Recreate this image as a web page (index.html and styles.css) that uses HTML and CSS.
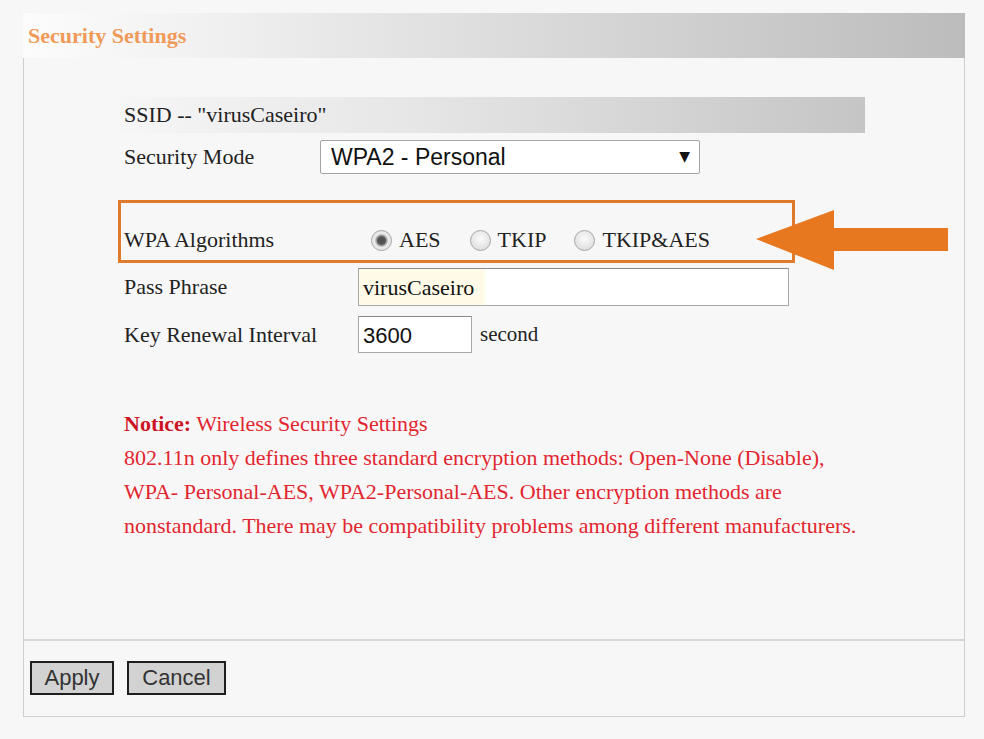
FILE: index.html
```html
<!DOCTYPE html>
<html lang="en">
<head>
  <meta charset="UTF-8" />
  <title>Security Settings</title>
  <link rel="stylesheet" href="styles.css">
</head>
<body>
  <div class="title-bar">Security Settings</div>

  <div class="panel">
    <div class="content">
      <div class="ssid-bar">SSID -- "virusCaseiro"</div>

      <div class="row mode-row">
        <span class="label mode-label">Security Mode</span>
        <div class="select-wrap">
          <select class="mode-select">
            <option>WPA2 - Personal</option>
          </select>
        </div>
      </div>

      <div class="wpa-wrap">
        <div class="wpa-box">
          <span class="label wpa-label">WPA Algorithms</span>
          <label class="radio aes"><input type="radio" name="algo" checked> AES</label>
          <label class="radio tkip"><input type="radio" name="algo"> TKIP</label>
          <label class="radio"><input type="radio" name="algo"> TKIP&amp;AES</label>
        </div>
        <svg class="arrow" width="192" height="62" viewBox="0 0 192 62">
          <polygon points="0,29 78,0 78,18 192,18 192,41 78,41 78,60" fill="#e8781f" />
        </svg>
      </div>

      <div class="row pass-row">
        <span class="label field-label">Pass Phrase</span>
        <input type="text" class="pass-input" value="virusCaseiro">
      </div>

      <div class="row key-row">
        <span class="label field-label">Key Renewal Interval</span>
        <input type="text" class="key-input" value="3600">
        <span class="unit">second</span>
      </div>

      <div class="notice">
        <b>Notice:</b> Wireless Security Settings<br>
        802.11n only defines three standard encryption methods: Open-None (Disable),<br>
        WPA- Personal-AES, WPA2-Personal-AES. Other encryption methods are<br>
        nonstandard. There may be compatibility problems among different manufacturers.
      </div>
    </div>

    <div class="footer">
      <button class="btn apply">Apply</button>
      <button class="btn cancel">Cancel</button>
    </div>
  </div>
</body>
</html>
```

FILE: styles.css
```css
body {
  margin: 0;
  padding: 13px 0 0 23px;
  background-color: #f7f7f7;
  font-family: "Liberation Serif", "Times New Roman", serif;
  font-size: 22px;
  color: #222;
}

.title-bar {
  width: 942px;
  height: 45px;
  box-sizing: border-box;
  padding-left: 5px;
  line-height: 45px;
  font-weight: bold;
  font-size: 22px;
  color: #ef9a58;
  background: linear-gradient(to right, #fcfcfc 0%, #efefef 22%, #bcbcbc 100%);
}

.panel {
  width: 942px;
  box-sizing: border-box;
  border: 1px solid #cfcfcf;
  border-top: none;
}

.content {
  height: 581px;
  box-sizing: border-box;
  padding: 39px 0 0 94px;
}

.ssid-bar {
  width: 747px;
  height: 36px;
  box-sizing: border-box;
  padding-left: 6px;
  line-height: 36px;
  background: linear-gradient(to right, #f6f6f6 0%, #e6e6e6 40%, #c5c5c5 100%);
}

.row {
  display: flex;
  align-items: center;
  padding-left: 6px;
}

.label {
  flex-shrink: 0;
}

.mode-row {
  margin-top: 7px;
  height: 34px;
}

.mode-label {
  width: 196px;
}

.select-wrap {
  position: relative;
}

.select-wrap::after {
  content: "▼";
  position: absolute;
  right: 10px;
  top: 8px;
  font-family: "DejaVu Sans", sans-serif;
  font-size: 14px;
  color: #111;
  pointer-events: none;
}

.mode-select {
  appearance: none;
  -webkit-appearance: none;
  width: 380px;
  height: 34px;
  padding: 0 10px;
  border: 1px solid #a4a4a4;
  border-radius: 2px;
  background: #fff;
  font-family: "Liberation Sans", Arial, sans-serif;
  font-size: 23px;
  color: #111;
}

.wpa-wrap {
  position: relative;
  margin-top: 26px;
  width: 677px;
}

.wpa-box {
  display: flex;
  align-items: center;
  height: 63px;
  box-sizing: border-box;
  border: 3px solid #e07a2c;
  padding: 22px 0 5px 3px;
}

.wpa-label {
  width: 247px;
}

.radio {
  display: flex;
  align-items: center;
  gap: 7px;
  margin-right: 11px;
}

.radio.aes {
  margin-right: 29px;
}

.radio.tkip {
  margin-right: 28px;
}

.radio input {
  appearance: none;
  -webkit-appearance: none;
  margin: 0;
  width: 21px;
  height: 21px;
  border-radius: 50%;
  border: 1px solid #a6a6a6;
  background: radial-gradient(circle at 50% 40%, #fafafa 0%, #e2e2e2 70%, #d2d2d2 100%);
}

.radio input:checked {
  background: radial-gradient(circle, #4a4a4a 0, #5a5a5a 4px, #9a9a9a 5px, #ececec 7px, #d8d8d8 100%);
}

.arrow {
  position: absolute;
  left: 638px;
  top: 10px;
}

.pass-row {
  margin-top: 5px;
  height: 38px;
}

.field-label {
  width: 234px;
}

.pass-input,
.key-input {
  height: 38px;
  box-sizing: border-box;
  border: 1px solid #a8a8a8;
  border-top-color: #8a8a8a;
  padding: 2px 4px 0;
  color: #111;
}

.pass-input {
  width: 431px;
  font-family: "Liberation Serif", "Times New Roman", serif;
  font-size: 22px;
  background: linear-gradient(to right, #fffbe8 0, #fffbe8 126px, #fff 126px);
}

.key-row {
  margin-top: 10px;
  height: 37px;
}

.key-input {
  width: 114px;
  height: 37px;
  font-family: "Liberation Sans", Arial, sans-serif;
  font-size: 22px;
  background: #fff;
}

.unit {
  margin-left: 8px;
  font-size: 21px;
}

.notice {
  margin-top: 54px;
  padding-left: 6px;
  line-height: 34px;
  color: #e2262f;
  font-size: 22px;
}

.notice b {
  color: #cc1424;
}

.footer {
  border-top: 2px solid #d8d8d8;
  padding: 20px 6px 21px;
  display: flex;
  gap: 13px;
}

.btn {
  height: 34px;
  box-sizing: border-box;
  border: 2px solid #1e1e1e;
  background-color: #d2d2d2;
  color: #333;
  font-family: "Liberation Sans", Arial, sans-serif;
  font-size: 22px;
  padding: 0;
  cursor: pointer;
}

.apply {
  width: 84px;
}

.cancel {
  width: 99px;
}
```
